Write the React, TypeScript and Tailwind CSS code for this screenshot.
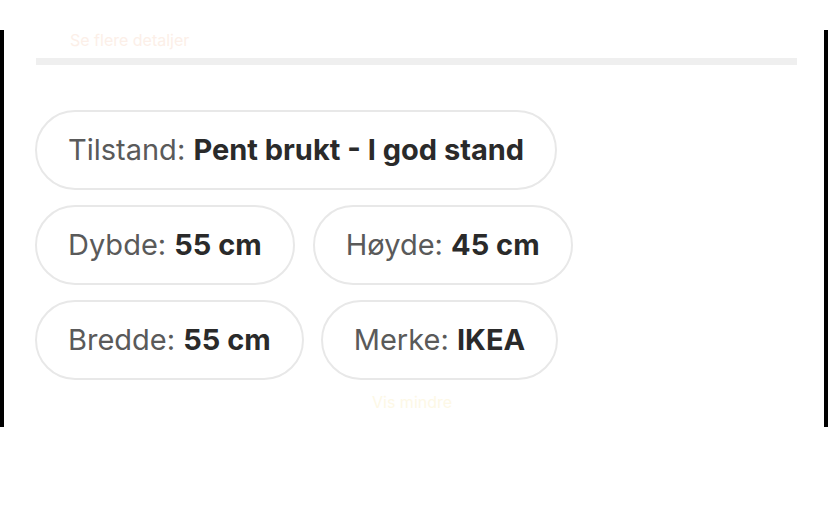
import React from "react";

const Pill = ({ label, value }: { label: string; value: string }) => (
  <div className="flex items-center h-[80px] rounded-full border-2 border-[#e8e8e8] px-[31px] whitespace-nowrap text-[29px]">
    <span className="text-[#5a5a5a]">{label}:&nbsp;</span>
    <span className="font-bold text-[#2a2a2a]">{value}</span>
  </div>
);

export default function App() {
  return (
    <div
      className="w-[828px] h-[513px] bg-white"
      style={{ fontFamily: "Inter, 'Noto Sans', sans-serif" }}
    >
      <div className="h-[30px]" />
      <div className="h-[397px] border-l-4 border-r-4 border-black flex flex-col">
        <div className="h-[28px] pl-[66px] pt-[2px] text-[16px] text-[#fcefe8] leading-none">
          Se flere detaljer
        </div>
        <div className="ml-[32px] mr-[27px] h-[7px] bg-[#efefef]" />
        <div className="flex flex-col gap-[15px] pl-[31px] pt-[45px]">
          <div className="flex">
            <Pill label="Tilstand" value="Pent brukt - I god stand" />
          </div>
          <div className="flex gap-[18px]">
            <Pill label="Dybde" value="55 cm" />
            <Pill label="Høyde" value="45 cm" />
          </div>
          <div className="flex gap-[17px]">
            <Pill label="Bredde" value="55 cm" />
            <Pill label="Merke" value="IKEA" />
          </div>
        </div>
        <div className="pl-[368px] pt-[14px] text-[16px] text-[#fdf8e6] leading-none">
          Vis mindre
        </div>
      </div>
    </div>
  );
}
